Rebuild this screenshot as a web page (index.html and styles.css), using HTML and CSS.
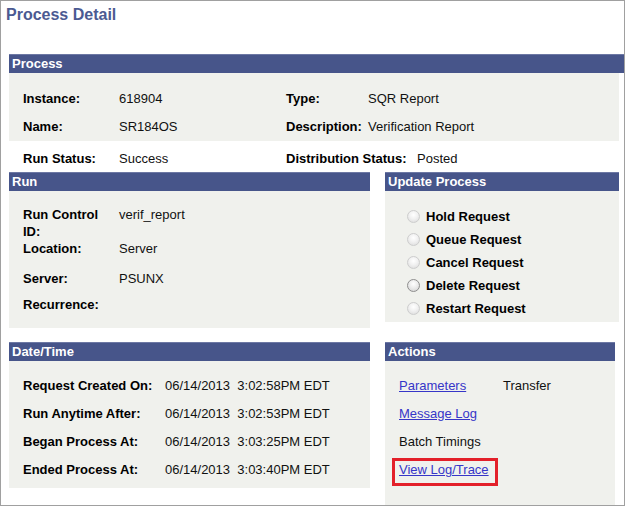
FILE: index.html
```html
<!DOCTYPE html>
<html lang="en">
<head>
    <meta charset="UTF-8">
    <meta name="viewport" content="width=device-width, initial-scale=1.0">
    <title>Process Detail</title>
    <link rel="stylesheet" href="styles.css">
</head>
<body>
    <div class="page">
        <h1 class="page-title">Process Detail</h1>

        <section class="group">
            <div class="group-head">Process</div>
            <div class="group-body info-grid">
                <span class="lbl">Instance:</span>
                <span class="val">618904</span>
                <span class="lbl">Type:</span>
                <span class="val">SQR Report</span>
                <span class="lbl">Name:</span>
                <span class="val">SR184OS</span>
                <span class="lbl">Description:</span>
                <span class="val">Verification Report</span>
            </div>
            <div class="info-grid status-row">
                <span class="lbl">Run Status:</span>
                <span class="val">Success</span>
                <span class="lbl">Distribution Status:</span>
                <span class="val">Posted</span>
            </div>
        </section>

        <div class="columns">
            <section class="group">
                <div class="group-head">Run</div>
                <div class="group-body run-grid">
                    <span class="lbl">Run Control ID:</span>
                    <span class="val">verif_report</span>
                    <span class="lbl">Location:</span>
                    <span class="val">Server</span>
                    <span class="lbl">Server:</span>
                    <span class="val">PSUNX</span>
                    <span class="lbl">Recurrence:</span>
                    <span class="val"></span>
                </div>
            </section>

            <section class="group">
                <div class="group-head">Update Process</div>
                <div class="group-body update-list">
                    <label class="radio-row"><span class="radio"></span>Hold Request</label>
                    <label class="radio-row"><span class="radio"></span>Queue Request</label>
                    <label class="radio-row"><span class="radio"></span>Cancel Request</label>
                    <label class="radio-row"><span class="radio radio-focus"></span>Delete Request</label>
                    <label class="radio-row"><span class="radio"></span>Restart Request</label>
                </div>
            </section>

            <section class="group">
                <div class="group-head">Date/Time</div>
                <div class="group-body date-grid">
                    <span class="lbl">Request Created On:</span>
                    <span class="val">06/14/2013  3:02:58PM EDT</span>
                    <span class="lbl">Run Anytime After:</span>
                    <span class="val">06/14/2013  3:02:53PM EDT</span>
                    <span class="lbl">Began Process At:</span>
                    <span class="val">06/14/2013  3:03:25PM EDT</span>
                    <span class="lbl">Ended Process At:</span>
                    <span class="val">06/14/2013  3:03:40PM EDT</span>
                </div>
            </section>

            <section class="group group-actions">
                <div class="group-head">Actions</div>
                <div class="group-body action-grid">
                    <a href="#" class="link">Parameters</a>
                    <span class="val">Transfer</span>
                    <a href="#" class="link">Message Log</a>
                    <span></span>
                    <span class="val">Batch Timings</span>
                    <span></span>
                    <span><span class="callout"><a href="#" class="link">View Log/Trace</a></span></span>
                    <span></span>
                </div>
            </section>
        </div>
    </div>
</body>
</html>
```

FILE: styles.css
```css
body, html {
    margin: 0;
    padding: 0;
    background: #ffffff;
    font-family: "Liberation Sans", Arial, sans-serif;
    font-size: 13px;
    color: #000;
}
.page {
    width: 625px;
    height: 506px;
    box-sizing: border-box;
    border: 1px solid #a0a0a0;
    padding-left: 8px;
    overflow: hidden;
}
.page-title {
    margin: 4px 0 30px -3px;
    font-size: 16px;
    line-height: 19px;
    font-weight: bold;
    color: #4b5a92;
}
.group-head {
    height: 19px;
    box-sizing: border-box;
    line-height: 18px;
    padding-left: 3px;
    background-color: #47558a;
    border-top: 1px solid #6d78a4;
    color: #fff;
    font-weight: bold;
}
.group-body {
    background-color: #f0f1ed;
}
.lbl {
    font-weight: bold;
}
.val {
    color: #111;
    white-space: pre;
}

/* process block */
.info-grid {
    display: grid;
    grid-template-columns: 96px 167px 82px 1fr;
    grid-auto-rows: 28px;
    line-height: 28px;
    padding: 12px 0 0 14px;
    width: 610px;
    box-sizing: border-box;
}
.status-row {
    grid-template-columns: 96px 167px 131px 1fr;
    grid-auto-rows: 16px;
    line-height: 16px;
    padding: 10px 0 5px 14px;
}

.columns {
    display: grid;
    grid-template-columns: 361px 234px;
    column-gap: 15px;
    row-gap: 14px;
    align-items: start;
}

/* run block */
.run-grid {
    display: grid;
    grid-template-columns: 96px 1fr;
    grid-template-rows: 34px 30px 26px 17px;
    line-height: 17px;
    padding: 15px 0 15px 14px;
}
.run-grid .lbl {
    padding-right: 6px;
}

/* update process */
.update-list {
    display: flex;
    flex-direction: column;
    padding: 14px 0 2px 22px;
}
.radio-row {
    display: flex;
    align-items: center;
    gap: 6px;
    height: 23px;
    line-height: 23px;
    font-weight: bold;
}
.radio {
    width: 11px;
    height: 11px;
    border-radius: 50%;
    border: 1px solid #cdcdcd;
    background: radial-gradient(circle at 50% 35%, #ffffff 0, #f1f1f1 45%, #d9d9d9 100%);
}
.radio-focus {
    border-color: #8e8e8e;
    background: radial-gradient(circle at 50% 35%, #ffffff 0, #ececec 45%, #cfcfcf 100%);
}

/* date/time */
.date-grid {
    display: grid;
    grid-template-columns: 142px 1fr;
    grid-auto-rows: 28px;
    line-height: 28px;
    padding: 11px 0 4px 14px;
}

/* actions */
.group-actions {
    width: 230px;
}
.action-grid {
    display: grid;
    grid-template-columns: 104px 1fr;
    grid-auto-rows: 28px;
    line-height: 28px;
    align-content: start;
    height: 144px;
    padding: 11px 0 0 14px;
    box-sizing: border-box;
}
.link {
    color: #3636c8;
    text-decoration: underline;
}
.callout {
    display: inline-block;
    line-height: 16px;
    margin-left: -7px;
    padding: 1px 6px 5px 4px;
    border: 3px solid #e3202a;
    white-space: nowrap;
}
```
